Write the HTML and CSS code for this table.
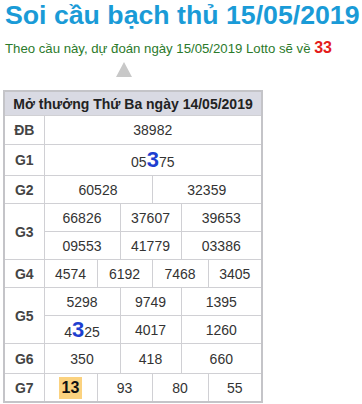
FILE: index.html
```html
<!DOCTYPE html>
<html lang="vi">
<head>
<meta charset="utf-8">
<link rel="stylesheet" href="styles.css">
</head>
<body>
<div class="page">
  <h1 class="title">Soi cầu bạch thủ 15/05/2019</h1>
  <p class="predict">Theo cầu này, dự đoán ngày 15/05/2019 Lotto sẽ về <b class="lotto">33</b></p>
  <div class="arrow-row"><span class="arrow"></span></div>
  <table class="kq">
    <colgroup>
      <col class="c-label">
      <col class="c1"><col class="c2"><col class="c3"><col class="c4"><col class="c5"><col class="c6">
      <col class="c7"><col class="c8"><col class="c9"><col class="c10"><col class="c11"><col class="c12">
    </colgroup>
    <thead>
      <tr><th colspan="13" class="head">Mở thưởng Thứ Ba ngày 14/05/2019</th></tr>
    </thead>
    <tbody>
      <tr class="r-db"><td class="lbl">ĐB</td><td colspan="12">38982</td></tr>
      <tr class="r-g1"><td class="lbl">G1</td><td colspan="12">05<span class="hit">3</span>75</td></tr>
      <tr class="r-g2"><td class="lbl">G2</td><td colspan="6">60528</td><td colspan="6">32359</td></tr>
      <tr class="r-g3a"><td class="lbl" rowspan="2">G3</td><td colspan="4">66826</td><td colspan="4">37607</td><td colspan="4">39653</td></tr>
      <tr class="r-g3b"><td colspan="4">09553</td><td colspan="4">41779</td><td colspan="4">03386</td></tr>
      <tr class="r-g4"><td class="lbl">G4</td><td colspan="3">4574</td><td colspan="3">6192</td><td colspan="3">7468</td><td colspan="3">3405</td></tr>
      <tr class="r-g5a"><td class="lbl" rowspan="2">G5</td><td colspan="4">5298</td><td colspan="4">9749</td><td colspan="4">1395</td></tr>
      <tr class="r-g5b"><td colspan="4">4<span class="hit">3</span>25</td><td colspan="4">4017</td><td colspan="4">1260</td></tr>
      <tr class="r-g6"><td class="lbl">G6</td><td colspan="4">350</td><td colspan="4">418</td><td colspan="4">660</td></tr>
      <tr class="r-g7"><td class="lbl">G7</td><td colspan="3"><span class="mark">13</span></td><td colspan="3">93</td><td colspan="3">80</td><td colspan="3">55</td></tr>
    </tbody>
  </table>
</div>
</body>
</html>
```
FILE: styles.css
```css
html, body {
  margin: 0;
  padding: 0;
  background: #fff;
}
.page {
  padding: 0 3px;
  font-family: "Liberation Sans", Arial, sans-serif;
}
.title {
  margin: 0;
  padding-left: 2px;
  font-size: 26.7px;
  line-height: 31px;
  font-weight: bold;
  white-space: nowrap;
  color: #1a9bd7;
}
.predict {
  margin: 7px 0 0;
  padding-left: 2px;
  font-size: 13.2px;
  line-height: 20px;
  white-space: nowrap;
  color: #2b7a2b;
}
.lotto {
  color: #e41b1b;
  font-size: 16px;
}
.arrow-row {
  display: flex;
  padding-left: 113px;
  height: 31px;
  padding-top: 3px;
  box-sizing: border-box;
}
.arrow {
  width: 0;
  height: 0;
  border-left: 8px solid transparent;
  border-right: 8px solid transparent;
  border-bottom: 15px solid #c8c8c8;
}
.kq {
  border-collapse: collapse;
  table-layout: fixed;
  width: 258px;
  border: 2px solid #c4c4c8;
  color: #333;
  font-size: 14px;
}
.c-label { width: 40px; }
.c1, .c2 { width: 18px; }
.c3 { width: 17px; }
.c4 { width: 23px; }
.c5, .c6 { width: 16px; }
.c7 { width: 15px; }
.c8 { width: 14px; }
.c9 { width: 27px; }
.c10, .c11, .c12 { width: 18px; }
.kq th, .kq td {
  border: 1px solid #d0d0d4;
  padding: 0;
  text-align: center;
  height: 27px;
}
.kq .head {
  height: 23px;
  background: #d9dae3;
  color: #222;
  font-weight: bold;
  font-size: 14px;
}
.r-db td { height: 28px; }
.r-g1 td { height: 30px; }
.r-g6 td { height: 29px; }
.kq .lbl {
  font-weight: bold;
  color: #444;
}
.hit {
  color: #1e3fd0;
  font-weight: bold;
  font-size: 22px;
  line-height: 22px;
}
.mark {
  display: inline-block;
  background: #fbd27f;
  color: #111;
  font-weight: bold;
  font-size: 16px;
  line-height: 22px;
  padding: 0 3px;
}
```
